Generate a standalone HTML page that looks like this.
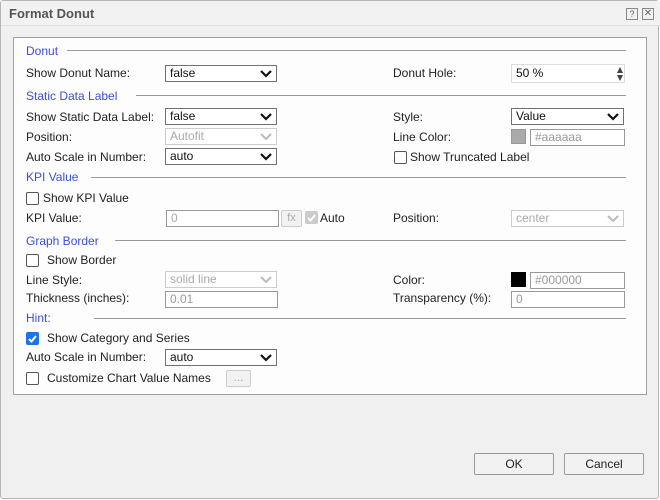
<!DOCTYPE html>
<html><head><style>
*{box-sizing:border-box;margin:0;padding:0}
body{width:660px;height:500px;background:#fff;font-family:"Liberation Sans",Tahoma,sans-serif;font-size:12px;color:#222;position:relative;overflow:hidden}
.dlg{position:absolute;left:0;top:0;width:659px;height:499px;background:#f0f0f0;border:1px solid #b5b5b5;border-radius:3px}
.tb{position:absolute;left:0;top:0;width:659px;height:25px;border-bottom:1px solid #dcdcdc;background:#f2f2f2}
.panel{position:absolute;left:13px;top:37px;width:634px;height:358px;background:#fcfdfc;border:1px solid #a0a0a0}
.a{position:absolute;line-height:14px;white-space:nowrap}
.h{color:#3b4fd6}
.ln{position:absolute;height:1px;background:#999}
.sel,.inp{position:absolute;height:17px;border:1px solid #707070;background:#fff;line-height:15px;padding-left:4px;color:#111}
.dis{border-color:#ccc;color:#aaa}
.ind{border-color:#999;color:#999}
.car{position:absolute;right:4px;top:3px;width:12px;height:9px}
.cb{position:absolute;width:13px;height:13px;border:1px solid #555;border-radius:2px;background:#fff}
.btn{position:absolute;border:1px solid #999;border-radius:2px;background:#f2f2f2;text-align:center;color:#222}
</style></head><body>
<div class="dlg">
<div class="tb"></div>
<div class="a" style="left:8px;top:6px;font-weight:bold;font-size:13px;color:#555">Format Donut</div>
<div style="position:absolute;left:625px;top:7px;width:12px;height:12px;border:1px solid #888;font-size:9px;line-height:10px;text-align:center;color:#666">?</div>
<div style="position:absolute;left:641px;top:7px;width:12px;height:12px;border:1px solid #888;font-size:10px;line-height:10px;text-align:center;color:#666">✕</div>
</div>
<div class="panel"></div>

<div class="a h" style="left:26px;top:44px">Donut</div><div class="ln" style="left:67px;top:50px;width:559px"></div>
<div class="a" style="left:26px;top:66px">Show Donut Name:</div>
<div class="sel" style="left:165px;top:65px;width:112px">false<svg class="car" viewBox="0 0 12 9"><path d="M1 2l5 5 5-5" stroke="#111" stroke-width="2.2" fill="none"/></svg></div>
<div class="a" style="left:393px;top:66px">Donut Hole:</div>
<div class="inp" style="left:511px;top:64px;width:114px;height:19px;border-color:#ddd;line-height:17px">50 %<svg style="position:absolute;right:1px;top:2px" width="6" height="14" viewBox="0 0 6 14"><path d="M3 0L6 6H0z M3 14L0 8h6z" fill="#444"/></svg></div>

<div class="a h" style="left:26px;top:89px">Static Data Label</div><div class="ln" style="left:136px;top:95px;width:490px"></div>
<div class="a" style="left:26px;top:110px">Show Static Data Label:</div>
<div class="sel" style="left:165px;top:108px;width:112px">false<svg class="car" viewBox="0 0 12 9"><path d="M1 2l5 5 5-5" stroke="#111" stroke-width="2.2" fill="none"/></svg></div>
<div class="a" style="left:393px;top:110px">Style:</div>
<div class="sel" style="left:511px;top:108px;width:113px">Value<svg class="car" viewBox="0 0 12 9"><path d="M1 2l5 5 5-5" stroke="#111" stroke-width="2.2" fill="none"/></svg></div>
<div class="a" style="left:26px;top:130px">Position:</div>
<div class="sel dis" style="left:165px;top:128px;width:112px">Autofit<svg class="car" viewBox="0 0 12 9"><path d="M1 2l5 5 5-5" stroke="#bbb" stroke-width="2" fill="none"/></svg></div>
<div class="a" style="left:393px;top:130px">Line Color:</div>
<div style="position:absolute;left:511px;top:129px;width:15px;height:15px;background:#aaa;border:1px solid #999"></div>
<div class="inp ind" style="left:530px;top:129px;width:95px">#aaaaaa</div>
<div class="a" style="left:26px;top:150px">Auto Scale in Number:</div>
<div class="sel" style="left:165px;top:148px;width:112px">auto<svg class="car" viewBox="0 0 12 9"><path d="M1 2l5 5 5-5" stroke="#111" stroke-width="2.2" fill="none"/></svg></div>
<div class="cb" style="left:394px;top:151px"></div><div class="a" style="left:410px;top:150px">Show Truncated Label</div>

<div class="a h" style="left:26px;top:170px">KPI Value</div><div class="ln" style="left:91px;top:177px;width:535px"></div>
<div class="cb" style="left:26px;top:192px"></div><div class="a" style="left:43px;top:191px">Show KPI Value</div>
<div class="a" style="left:26px;top:211px">KPI Value:</div>
<div class="inp ind" style="left:166px;top:210px;width:113px;color:#aaa">0</div>
<div class="btn" style="left:281px;top:210px;width:21px;height:17px;border-color:#ccc;color:#aaa;line-height:15px;font-size:11px">fx</div>
<div style="position:absolute;left:305px;top:211px;width:13px;height:13px;background:#ccc;border-radius:2px"><svg width="13" height="13"><path d="M3 7l2.5 2.5L10 4" stroke="#fff" stroke-width="2" fill="none"/></svg></div>
<div class="a" style="left:320px;top:211px">Auto</div>
<div class="a" style="left:393px;top:211px">Position:</div>
<div class="sel dis" style="left:511px;top:210px;width:113px">center<svg class="car" viewBox="0 0 12 9"><path d="M1 2l5 5 5-5" stroke="#bbb" stroke-width="2" fill="none"/></svg></div>

<div class="a h" style="left:26px;top:234px">Graph Border</div><div class="ln" style="left:115px;top:240px;width:511px"></div>
<div class="cb" style="left:26px;top:254px"></div><div class="a" style="left:47px;top:253px">Show Border</div>
<div class="a" style="left:26px;top:273px">Line Style:</div>
<div class="sel dis" style="left:165px;top:271px;width:112px">solid line<svg class="car" viewBox="0 0 12 9"><path d="M1 2l5 5 5-5" stroke="#bbb" stroke-width="2" fill="none"/></svg></div>
<div class="a" style="left:393px;top:273px">Color:</div>
<div style="position:absolute;left:511px;top:272px;width:15px;height:15px;background:#000"></div>
<div class="inp ind" style="left:530px;top:272px;width:95px">#000000</div>
<div class="a" style="left:26px;top:291px">Thickness (inches):</div>
<div class="inp ind" style="left:165px;top:291px;width:113px">0.01</div>
<div class="a" style="left:393px;top:291px">Transparency (%):</div>
<div class="inp ind" style="left:511px;top:291px;width:114px">0</div>

<div class="a h" style="left:26px;top:311px">Hint:</div><div class="ln" style="left:94px;top:318px;width:532px"></div>
<div style="position:absolute;left:26px;top:332px;width:13px;height:13px;background:#1a73e8;border-radius:2px"><svg width="13" height="13"><path d="M3 7l2.5 2.5L10 4" stroke="#fff" stroke-width="2" fill="none"/></svg></div>
<div class="a" style="left:47px;top:331px">Show Category and Series</div>
<div class="a" style="left:26px;top:350px">Auto Scale in Number:</div>
<div class="sel" style="left:165px;top:349px;width:112px">auto<svg class="car" viewBox="0 0 12 9"><path d="M1 2l5 5 5-5" stroke="#111" stroke-width="2.2" fill="none"/></svg></div>
<div class="cb" style="left:26px;top:372px"></div><div class="a" style="left:47px;top:371px">Customize Chart Value Names</div>
<div class="btn" style="left:226px;top:370px;width:25px;height:17px;border-color:#ccc;color:#aaa;line-height:13px">...</div>

<div class="btn" style="left:474px;top:453px;width:80px;height:22px;line-height:20px">OK</div>
<div class="btn" style="left:564px;top:453px;width:80px;height:22px;line-height:20px">Cancel</div>
</body></html>
